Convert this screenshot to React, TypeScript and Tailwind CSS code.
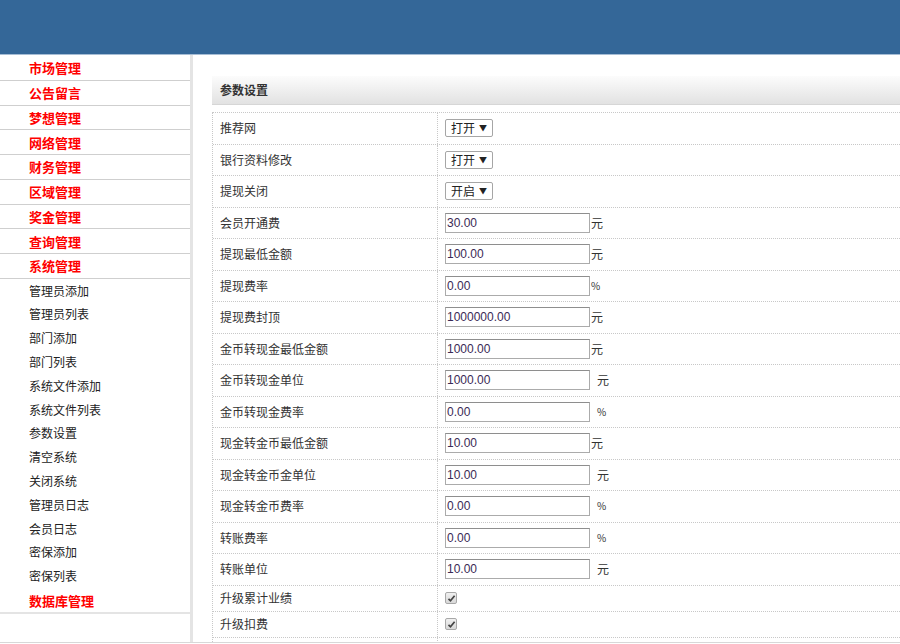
import React from "react";

type Row = {
  label: string;
  type: "select" | "input" | "check";
  value?: string;
  unit?: string;
  gap?: boolean;
};

const rows: Row[] = [
  { label: "推荐网", type: "select", value: "打开" },
  { label: "银行资料修改", type: "select", value: "打开" },
  { label: "提现关闭", type: "select", value: "开启" },
  { label: "会员开通费", type: "input", value: "30.00", unit: "元" },
  { label: "提现最低金额", type: "input", value: "100.00", unit: "元" },
  { label: "提现费率", type: "input", value: "0.00", unit: "%" },
  { label: "提现费封顶", type: "input", value: "1000000.00", unit: "元" },
  { label: "金币转现金最低金额", type: "input", value: "1000.00", unit: "元" },
  { label: "金币转现金单位", type: "input", value: "1000.00", unit: "元", gap: true },
  { label: "金币转现金费率", type: "input", value: "0.00", unit: "%", gap: true },
  { label: "现金转金币最低金额", type: "input", value: "10.00", unit: "元" },
  { label: "现金转金币金单位", type: "input", value: "10.00", unit: "元", gap: true },
  { label: "现金转金币费率", type: "input", value: "0.00", unit: "%", gap: true },
  { label: "转账费率", type: "input", value: "0.00", unit: "%", gap: true },
  { label: "转账单位", type: "input", value: "10.00", unit: "元", gap: true },
  { label: "升级累计业绩", type: "check" },
  { label: "升级扣费", type: "check" },
  { label: "", type: "check" },
];

const headings = [
  "市场管理",
  "公告留言",
  "梦想管理",
  "网络管理",
  "财务管理",
  "区域管理",
  "奖金管理",
  "查询管理",
  "系统管理",
];

const subs = [
  "管理员添加",
  "管理员列表",
  "部门添加",
  "部门列表",
  "系统文件添加",
  "系统文件列表",
  "参数设置",
  "清空系统",
  "关闭系统",
  "管理员日志",
  "会员日志",
  "密保添加",
  "密保列表",
];

const cjk = "font-['Noto_Sans_CJK_SC','Noto_Sans',sans-serif]";

function Checkbox() {
  return (
    <div className="w-[12px] h-[12px] border border-[#a8a8a8] rounded-[2px] bg-gradient-to-b from-[#f0f0f0] to-[#d8d8d8] flex items-center justify-center">
      <svg width="9" height="9" viewBox="0 0 9 9">
        <path d="M1.5 4.8 L3.5 6.8 L7.6 1.8" fill="none" stroke="#444" strokeWidth="1.7" />
      </svg>
    </div>
  );
}

function ValueCell({ row }: { row: Row }) {
  if (row.type === "select") {
    return (
      <div className="h-[18px] w-[48px] border border-[#a6a6a6] rounded-[2px] bg-white flex items-center pl-[5px] pr-[5px] justify-between text-[12px] text-[#222] leading-none">
        <span>{row.value}</span>
        <span className="text-[8px] text-[#222]">▼</span>
      </div>
    );
  }
  if (row.type === "check") {
    if (!row.label) return null;
    return <Checkbox />;
  }
  return (
    <div className="flex items-center">
      <div className="h-[20px] w-[145px] border border-[#ababab] border-t-[#8e8e8e] bg-white flex items-center pl-[1px] text-[12px] text-[#3a2a55] font-['Liberation_Sans',Arial,sans-serif] leading-none">
        {row.value}
      </div>
      <span
        className={`${row.gap ? "ml-[7px]" : "ml-[1px]"} ${
          row.unit === "%" ? "text-[10px]" : "text-[12px]"
        } text-[#333] leading-none`}
      >
        {row.unit}
      </span>
    </div>
  );
}

export default function App() {
  return (
    <div className={`w-[900px] h-[644px] overflow-hidden bg-white ${cjk}`}>
      <div className="h-[55px] bg-[#346798] border-b border-[#a6bdd5]" />
      <div className="flex h-[588px] border-b border-[#d8d8d8]">
        <aside className="w-[193px] shrink-0 border-r-[3px] border-[#e4e4e4] pt-[1px]">
          {headings.map((h) => (
            <div
              key={h}
              className="h-[24.75px] border-b border-[#cfcfcf] flex items-center pl-[29px] text-[13px] font-bold text-[#ff0000] leading-none"
            >
              {h}
            </div>
          ))}
          {subs.map((s) => (
            <div
              key={s}
              className="h-[23.8px] flex items-center pl-[29px] text-[12px] text-[#222] leading-none"
            >
              {s}
            </div>
          ))}
          <div className="h-[23.8px] border-b-2 border-[#e4e4e4] flex items-center pl-[29px] text-[13px] font-bold text-[#ff0000] leading-none box-content">
            数据库管理
          </div>
        </aside>
        <main className="flex-1 pl-[19px] pt-[21px] overflow-hidden">
          <div className="h-[29px] bg-gradient-to-b from-[#fcfcfc] to-[#e2e2e2] border-b border-[#d6d6d6] flex items-center pl-[8px] text-[12px] font-bold text-[#333] leading-none">
            参数设置
          </div>
          <div className="mt-[7px] border-t border-l border-dotted border-[#c8c8c8]">
            {rows.map((r, i) => (
              <div
                key={i}
                className={`flex border-b border-dotted border-[#c8c8c8] ${
                  r.type === "check" ? "h-[26px]" : "h-[31.5px]"
                }`}
              >
                <div className="w-[225px] shrink-0 border-r border-dotted border-[#c8c8c8] flex items-center pl-[7px] text-[12px] text-[#333] leading-none">
                  {r.label}
                </div>
                <div className="flex-1 flex items-center pl-[7px]">
                  <ValueCell row={r} />
                </div>
              </div>
            ))}
          </div>
        </main>
      </div>
    </div>
  );
}
